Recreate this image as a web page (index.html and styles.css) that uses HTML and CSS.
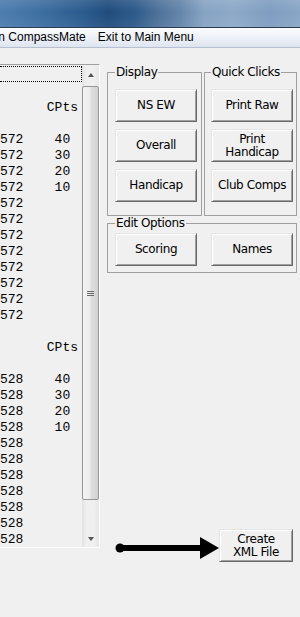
FILE: index.html
```html
<!DOCTYPE html>
<html>

<head>
    <meta charset="UTF-8">
    <title>Results - CompassMate</title>
    <link rel="stylesheet" href="styles.css">
</head>

<body>
    <div class="titlebar"></div>

    <div class="menubar">
        <span class="menu-item first">Run CompassMate</span>
        <span class="menu-item">Exit to Main Menu</span>
    </div>

    <div class="main">
        <!-- results list -->
        <div class="listbox">
            <div class="list-text">
                <div class="row focus"></div>
                <div class="row"></div>
                <div class="row">      CPts</div>
                <div class="row"></div>
                <div class="row">572    40</div>
                <div class="row">572    30</div>
                <div class="row">572    20</div>
                <div class="row">572    10</div>
                <div class="row">572</div>
                <div class="row">572</div>
                <div class="row">572</div>
                <div class="row">572</div>
                <div class="row">572</div>
                <div class="row">572</div>
                <div class="row">572</div>
                <div class="row">572</div>
                <div class="row"></div>
                <div class="row">      CPts</div>
                <div class="row"></div>
                <div class="row">528    40</div>
                <div class="row">528    30</div>
                <div class="row">528    20</div>
                <div class="row">528    10</div>
                <div class="row">528</div>
                <div class="row">528</div>
                <div class="row">528</div>
                <div class="row">528</div>
                <div class="row">528</div>
                <div class="row">528</div>
                <div class="row">528</div>
            </div>
            <div class="scrollbar">
                <div class="sb-btn up"></div>
                <div class="sb-thumb"><span class="grip"></span></div>
                <div class="sb-track"></div>
                <div class="sb-btn down"></div>
            </div>
        </div>

        <!-- options -->
        <div class="panel">
            <div class="group-row">
                <fieldset class="group display">
                    <legend>Display</legend>
                    <button class="btn">NS EW</button>
                    <button class="btn">Overall</button>
                    <button class="btn">Handicap</button>
                </fieldset>
                <fieldset class="group quick">
                    <legend>Quick Clicks</legend>
                    <button class="btn">Print Raw</button>
                    <button class="btn">Print<br>Handicap</button>
                    <button class="btn">Club Comps</button>
                </fieldset>
            </div>

            <fieldset class="group edit">
                <legend>Edit Options</legend>
                <button class="btn">Scoring</button>
                <button class="btn">Names</button>
            </fieldset>

            <div class="xml-row">
                <svg class="arrow" width="104" height="28" viewBox="0 0 104 28">
                    <circle cx="5" cy="16" r="4.5" fill="#000" />
                    <line x1="5" y1="16" x2="88" y2="16" stroke="#000" stroke-width="6" />
                    <polygon points="85,5 104,16 85,27" fill="#000" />
                </svg>
                <button class="btn xml">Create<br>XML File</button>
            </div>
        </div>
    </div>
</body>

</html>
```

FILE: styles.css
```css
html,
body {
    margin: 0;
}

body {
    width: 300px;
    height: 617px;
    overflow: hidden;
    background: #f0f0f0;
    font-family: "DejaVu Sans", sans-serif;
}

/* window chrome */

.titlebar {
    height: 27px;
    background:
        linear-gradient(180deg, rgba(255, 255, 255, .10), rgba(255, 255, 255, 0) 45%, rgba(255, 255, 255, .06)),
        linear-gradient(90deg, #4d7dae 0%, #3f70a3 12%, #2a5a8d 28%, #1f4c7d 36%, #2d5a8a 45%, #4b6f97 52%, #6384a9 60%, #86a3c3 68%, #8da9c8 78%, #7e9dc0 90%, #88a6c6 100%);
    border-bottom: 1px solid #283c54;
}

.menubar {
    display: flex;
    height: 19px;
    background: linear-gradient(#fbfcfe, #dfe5f0);
    border-bottom: 1px solid #b8c0cf;
    font: 12px/19px "Liberation Sans", sans-serif;
    color: #000;
    white-space: nowrap;
}

.menu-item {
    padding: 0 6px;
}

.menu-item.first {
    margin-left: -23px;
}

/* layout */

.main {
    display: flex;
    gap: 7px;
    padding-top: 16px;
}

/* list box */

.listbox {
    display: flex;
    width: 100px;
    height: 484px;
    box-sizing: border-box;
    padding-top: 1px;
    border-top: 1px solid #a0a0a0;
    border-right: 1px solid #fff;
    border-bottom: 1px solid #fff;
}

.list-text {
    width: 82px;
    overflow: hidden;
    font: 13px "Liberation Mono", monospace;
    color: #000;
}

.row {
    height: 16px;
    line-height: 20px;
    white-space: pre;
}

.row.focus {
    box-sizing: border-box;
    border: 1px dotted #000;
    border-left: none;
}

.scrollbar {
    display: flex;
    flex-direction: column;
    width: 17px;
    background: linear-gradient(90deg, #e2e2e2, #efefef 25%, #f0f0f0 70%, #e6e6e6);
}

.sb-btn {
    display: flex;
    align-items: center;
    justify-content: center;
    height: 17px;
}

.sb-btn::before {
    content: "";
    border-left: 3.5px solid transparent;
    border-right: 3.5px solid transparent;
}

.sb-btn.up::before {
    border-bottom: 4px solid #555;
}

.sb-btn.down::before {
    border-top: 4px solid #555;
}

.sb-thumb {
    display: flex;
    align-items: center;
    justify-content: center;
    height: 414px;
    margin-top: 3px;
    box-sizing: border-box;
    border: 1px solid #979797;
    border-radius: 2px;
    background: linear-gradient(90deg, #f4f4f4, #ececec 45%, #dedede 55%, #d2d2d2);
}

.grip {
    width: 7px;
    height: 5px;
    background: repeating-linear-gradient(#6a6a6a 0 1px, transparent 1px 2px);
}

.sb-track {
    flex: 1;
}

/* option groups */

.panel {
    width: 190px;
    padding-top: 1px;
}

.group-row {
    display: flex;
    gap: 2px;
}

.group {
    margin: 0;
    box-sizing: border-box;
    border: 1px solid #a0a0a0;
    min-width: 0;
}

.group legend {
    padding: 0 1px;
    font-size: 12px;
    line-height: 14px;
    letter-spacing: -0.4px;
    color: #000;
}

.display {
    width: 95px;
    padding: 10px 0 13px 7px;
}

.quick {
    width: 93px;
    padding: 10px 0 13px 6px;
}

.display .btn + .btn,
.quick .btn + .btn {
    margin-top: 7px;
}

.edit {
    display: flex;
    gap: 14px;
    width: 190px;
    padding: 3px 0 6px 7px;
}

.btn {
    display: block;
    width: 82px;
    height: 33px;
    padding: 0;
    background: #f0f0f0;
    border: 1px solid;
    border-color: #e3e3e3 #696969 #696969 #e3e3e3;
    box-shadow: inset 1px 1px 0 #fff, inset -1px -1px 0 #a0a0a0;
    font: 12px/13px "DejaVu Sans", sans-serif;
    letter-spacing: -0.4px;
    color: #000;
}

/* export */

.xml-row {
    display: flex;
    align-items: center;
    margin-top: 256px;
    padding-left: 8px;
}

.arrow {
    display: block;
}

.btn.xml {
    width: 74px;
}
```
